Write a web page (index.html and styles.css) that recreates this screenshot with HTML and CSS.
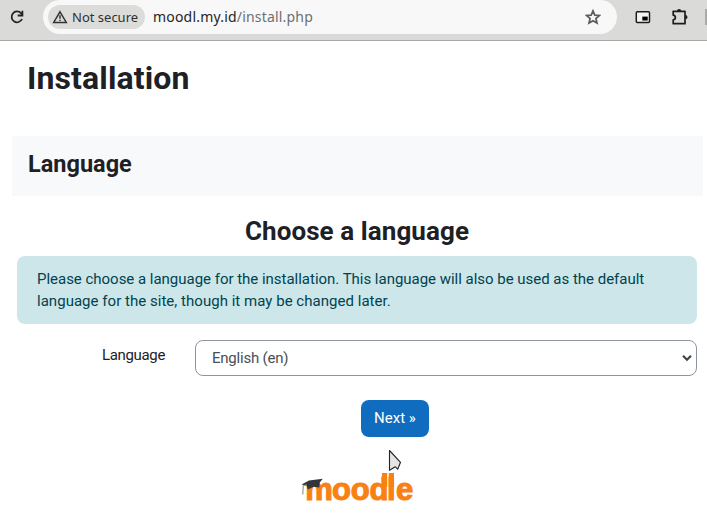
FILE: index.html
```html
<!DOCTYPE html>
<html lang="en">
<head>
<meta charset="utf-8">
<title>Installation</title>
<link rel="stylesheet" href="styles.css">
</head>
<body>
<header class="toolbar">
  <svg class="reload" width="16" height="16" viewBox="0 0 16 16" fill="none" stroke="#222" stroke-width="1.8"><path d="M13 10a5.4 5.4 0 1 1-1-5.8L13.5 6"/><path d="M13.4 1.8v4.7H8.7"/></svg>
  <div class="address">
    <div class="chip">
      <svg width="16" height="14" viewBox="0 0 16 14" fill="none" stroke="#333" stroke-width="1.5"><path d="M8 1.8 14.3 12.4H1.7Z"/><path d="M8 5.3v3.5M8 9.7v1.3"/></svg>
      <span class="chip-text">Not secure</span>
    </div>
    <span class="url">moodl.my.id<span class="path">/install.php</span></span>
    <svg class="star" width="16" height="16" viewBox="0 0 16 16" fill="none" stroke="#5c5c5c" stroke-width="1.7"><path d="m8 1.8 1.8 4.3 4.7.4-3.6 3 1.1 4.6L8 11.7l-4 2.4 1.1-4.6-3.6-3 4.7-.4Z"/></svg>
  </div>
  <svg class="pip" width="16" height="14" viewBox="0 0 16 14"><rect x="1.3" y="1.7" width="13.2" height="10.8" rx="1" fill="#f4f4f4" stroke="#1c1c1c" stroke-width="1.5"/><path d="M7.3 6.6h5.4v3.9H7.3z" fill="#000"/></svg>
  <svg class="puzzle" width="18" height="18" viewBox="0 0 18 18"><path d="M2.2 3.3H14V15.7H2.2V11.8C5.1 11.4 5.1 7.6 2.2 7.2Z" fill="none" stroke="#1c1c1c" stroke-width="1.7" stroke-linejoin="round"/><path d="M6 3a2.1 2.1 0 0 1 4.2 0zM14.4 7.1a2.1 2.1 0 0 1 0 4.2z" fill="#1c1c1c"/></svg>
  <span class="divider"></span>
</header>
<main>
  <h1>Installation</h1>
  <section class="stage"><h2>Language</h2></section>
  <h2 class="choose">Choose a language</h2>
  <p class="notice"><span class="first-line">Please choose a language for the installation. This language will also be used as the default</span><br>language for the site, though it may be changed later.</p>
  <div class="field">
    <label>Language</label>
    <div class="select"><span>English (en)</span><svg width="10" height="8" viewBox="0 0 10 8" fill="none" stroke="#444" stroke-width="2.2"><path d="m1 1.8 4 4 4-4"/></svg></div>
  </div>
  <button class="next">Next »</button>
  <svg class="logo" width="116" height="44" viewBox="0 0 116 44">
    <text class="wordmark" x="4.2 31 49.7 68.4 85.9 95" y="35">moodle</text>
    <path d="M81 8h5.2v14H81zM87.8 8H93v14h-5.2z" fill="#f98012"/>
    <path d="M.5 19.5 8 15.5 21.8 13.8 18.8 17.5 18.3 22.5 12.5 21.8 6.8 24.5 5.5 20.5Z" fill="#33353a"/>
    <path d="M6 19.5 2.2 20.7 1.8 29.5" fill="none" stroke="#777" stroke-width=".9"/>
  </svg>
</main>
<svg class="cursor" width="15" height="24" viewBox="0 0 15 24"><path d="M1.5 1.5 12.5 13.3 9.7 20.2 7.3 17.8 1.5 21.2Z" fill="#e5e5e5" stroke="#222" stroke-width="1.1" stroke-linejoin="round"/></svg>
</body>
</html>
```
FILE: styles.css
```css
* { box-sizing: border-box; }
body { margin: 0; height: 517px; overflow: hidden; background: #fff; color: #1d2125; font: 15px/22px Roboto, sans-serif; }
.toolbar { display: flex; align-items: center; height: 41px; padding: 0 0 7px 9px; background: #dadad9; border-bottom: 1px solid #aaa; }
.toolbar svg { flex: none; }
.address { display: flex; align-items: center; width: 574px; height: 34px; margin-left: 18px; padding-left: 5px; background: #f8f8f8; border-radius: 17px; font-family: "Noto Sans", sans-serif; }
.chip { display: flex; align-items: center; width: 97px; height: 24px; padding-left: 4px; gap: 4px; background: #dcdddb; border-radius: 12px; font-size: 13px; color: #303030; white-space: nowrap; }
.url { margin-left: 8px; font-size: 14px; letter-spacing: .19px; color: #252525; white-space: nowrap; }
.path { color: #6d6f71; }
.star { margin-left: auto; margin-right: 16px; }
.pip { margin-left: 18px; }
.puzzle { margin-left: 20px; }
.divider { width: 2px; height: 16px; margin-left: auto; background: #aaa; }
main { display: flex; flex-direction: column; padding: 0 4px 0 12px; }
h1, h2, p { margin: 0; }
h1 { margin: 17px 0 0 15px; height: 78px; font-size: 32px; line-height: 40px; letter-spacing: .13px; }
.stage { height: 60px; padding: 13px 16px; background: #f8f9fb; }
h2 { font-size: 23.5px; line-height: 30px; }
.choose { margin: 20px 1px 10px 0; text-align: center; font-size: 26px; letter-spacing: .08px; }
.notice { height: 68px; margin: 0 6px 0 5px; padding: 12px 20px; border-radius: 8px; background: #cce6ea; color: #00434e; white-space: nowrap; letter-spacing: .03px; }
.first-line { letter-spacing: -.02px; }
.field { display: flex; justify-content: flex-end; margin: 16px 6px 0 0; }
label { margin: 4px 30px 0 0; letter-spacing: -.35px; }
.select { display: flex; align-items: center; justify-content: space-between; width: 502px; height: 36px; padding: 0 4px 0 16px; border: 1px solid #8f959e; border-radius: 8px; color: #495057; letter-spacing: -.22px; }
.next { align-self: flex-start; width: 68px; height: 37px; margin: 24px 0 0 349px; padding: 0 0 2px; border: 0; border-radius: 8px; background: #0f6cbf; color: #fff; font: 15px/22px Roboto, sans-serif; }
.logo { margin: 28px 0 0 289px; overflow: visible; }
.wordmark { font: bold 31px "Liberation Sans", sans-serif; fill: #f98012; stroke: #f98012; stroke-width: 1.1px; }
.cursor { position: absolute; left: 388px; top: 449px; }
```
